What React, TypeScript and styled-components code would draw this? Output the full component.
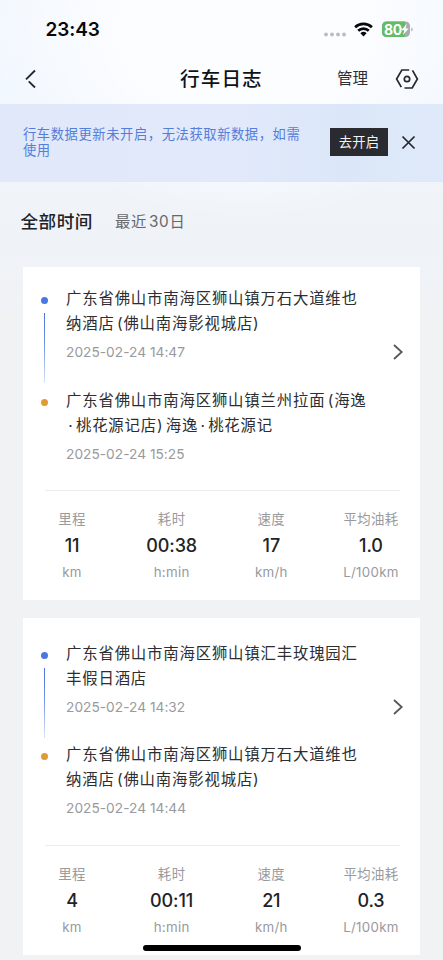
import React from "react";
import styled, { createGlobalStyle } from "styled-components";

const GlobalStyle = createGlobalStyle`
  * { box-sizing: border-box; }
  body {
    margin: 0;
    background: #f1f2f4;
    font-family: Inter, "Noto Sans CJK SC", sans-serif;
    color: #2b2c30;
  }
`;

const Page = styled.main`
  width: 443px;
  height: 960px;
  position: relative;
  overflow: hidden;
  background:
    radial-gradient(ellipse 260px 190px at 245px 30px, #fcfdff 40%, rgba(252, 253, 255, 0) 100%),
    linear-gradient(180deg, #f3f8fe 0px, #f1f7fe 120px, #f0f4f9 190px, #eff3f8 240px, #f1f2f4 330px);
`;

const StatusBar = styled.header`
  height: 56px;
  display: flex;
  justify-content: space-between;
  padding: 19px 30px 0 45.5px;
`;

const Clock = styled.time`
  font-size: 19px;
  line-height: 22px;
  font-weight: 600;
  letter-spacing: -0.1px;
  color: #08090b;
`;

const StatusIcons = styled.div`
  display: flex;
  height: 22px;
  svg { display: block; }
`;

const NavBar = styled.nav`
  height: 48px;
  display: grid;
  grid-template-columns: 180px 1fr 43px 51px;
  align-items: center;
  padding-bottom: 3px;
  padding-right: 12px;
`;

const IconButton = styled.button<{ $inset?: number }>`
  border: 0;
  background: none;
  padding: 0 0 0 ${(p) => p.$inset ?? 0}px;
  display: flex;
  align-items: center;
  svg { display: block; }
`;

const Title = styled.h1`
  margin: 0;
  font-size: 19.6px;
  line-height: 26px;
  font-weight: 500;
  letter-spacing: 1.1px;
  color: #111216;
`;

const Manage = styled.span`
  font-size: 15.5px;
  line-height: 22px;
  color: #2c2d33;
  white-space: nowrap;
`;

const Banner = styled.section`
  height: 78px;
  display: flex;
  align-items: flex-start;
  padding: 22px 27px 0 23px;
  background: linear-gradient(90deg, #e0e8f9 0%, #e2e9fb 50%, #dbe7f8 78%, #dfe9f9 100%);
`;

const BannerText = styled.p`
  margin: 0;
  width: 308px;
  font-size: 13.3px;
  line-height: 16px;
  letter-spacing: 0.57px;
  color: #557ddb;
  white-space: nowrap;
`;

const EnableButton = styled.button`
  width: 58px;
  height: 28px;
  margin-top: 2px;
  padding: 0;
  border: 0;
  background: #292b31;
  color: #f2f3f5;
  font: 13.3px/27px Inter, "Noto Sans CJK SC", sans-serif;
  letter-spacing: 0.3px;
`;

const CloseButton = styled(IconButton)`
  height: 28px;
  margin: 2px 0 0 13px;
`;

const Tabs = styled.div`
  height: 85px;
  display: flex;
  align-items: center;
  padding: 0 0 5px 20.5px;
  gap: 22px;
`;

const Tab = styled.span<{ $active?: boolean }>`
  font-size: ${(p) => (p.$active ? "17.6px" : "15.3px")};
  line-height: 26px;
  font-weight: ${(p) => (p.$active ? 500 : 400)};
  letter-spacing: ${(p) => (p.$active ? "0.5px" : "0.7px")};
  word-spacing: -3px;
  color: ${(p) => (p.$active ? "#212227" : "#66686d")};
`;

const TripList = styled.div`
  display: flex;
  flex-direction: column;
  gap: 18px;
  padding: 0 23px;
`;

const Card = styled.article<{ $top: number }>`
  background: #fff;
  padding: ${(p) => p.$top}px 20px 17px 22px;
`;

const Journey = styled.div`
  display: grid;
  grid-template-columns: 312px 1fr;
  height: 204px;
`;

const Stops = styled.div`
  display: flex;
  flex-direction: column;
  gap: 15px;
`;

const Stop = styled.div`
  display: grid;
  grid-template-columns: 21px 1fr;
  height: 86.5px;
`;

const Rail = styled.div`
  display: flex;
  flex-direction: column;
  align-items: center;
  width: 7px;
  margin-left: -4px;
  padding-top: 11px;
  gap: 9px;
`;

const Dot = styled.i<{ $color: string }>`
  width: 7px;
  height: 7px;
  flex: none;
  border-radius: 50%;
  background: ${(p) => p.$color};
`;

const Line = styled.i`
  width: 1px;
  height: 70px;
  flex: none;
  background: linear-gradient(#4b71d8, #7095e2 45%, #dbe3f5);
`;

const Address = styled.div`
  font-size: 15.4px;
  line-height: 25px;
  letter-spacing: 0.82px;
  word-spacing: -2.8px;
  color: #2d2e31;
  white-space: pre;
`;

const Moment = styled.time`
  display: block;
  margin-top: 6px;
  font-size: 13.7px;
  line-height: 20px;
  letter-spacing: 0.03px;
  color: #999a9d;
  white-space: nowrap;
`;

const OpenTrip = styled(IconButton)`
  justify-self: end;
  height: 20px;
  margin-top: 56px;
  margin-right: -4px;
`;

const Stats = styled.dl`
  display: flex;
  justify-content: space-between;
  margin: 0;
  padding-top: 18px;
  border-top: 1px solid #ededee;
`;

const Stat = styled.div`
  width: 58px;
  display: flex;
  flex-direction: column;
  align-items: center;
  white-space: nowrap;
  &:first-child { margin-left: -2px; }
`;

const StatName = styled.dt`
  font-size: 13.4px;
  line-height: 21px;
  letter-spacing: 0.4px;
  color: #999a9d;
`;

const StatValue = styled.dd`
  margin: 0;
  font-size: 18px;
  line-height: 32px;
  font-weight: 500;
  letter-spacing: -0.1px;
  color: #222326;
`;

const StatUnit = styled.dd`
  margin: 0;
  font-size: 13.3px;
  line-height: 21px;
  letter-spacing: 0.3px;
  color: #999a9d;
`;

const HomeIndicator = styled.div`
  position: absolute;
  left: 143px;
  top: 945px;
  width: 158px;
  height: 6px;
  border-radius: 3px;
  background: #000;
`;

const trips = [
  {
    top: 19,
    stops: [
      { lines: ["广东省佛山市南海区狮山镇万石大道维也", "纳酒店 (佛山南海影视城店)"], time: "2025-02-24 14:47" },
      { lines: ["广东省佛山市南海区狮山镇兰州拉面 (海逸", " · 桃花源记店) 海逸 · 桃花源记"], time: "2025-02-24 15:25" },
    ],
    values: ["11", "00:38", "17", "1.0"],
  },
  {
    top: 22.5,
    stops: [
      { lines: ["广东省佛山市南海区狮山镇汇丰玫瑰园汇", "丰假日酒店"], time: "2025-02-24 14:32" },
      { lines: ["广东省佛山市南海区狮山镇万石大道维也", "纳酒店 (佛山南海影视城店)"], time: "2025-02-24 14:44" },
    ],
    values: ["4", "00:11", "21", "0.3"],
  },
];

const metrics = [
  { name: "里程", unit: "km" },
  { name: "耗时", unit: "h:min" },
  { name: "速度", unit: "km/h" },
  { name: "平均油耗", unit: "L/100km" },
];

const BatteryLabel = styled.text`
  font: 700 14px Inter, sans-serif;
  letter-spacing: -0.4px;
  fill: #fff;
`;

function StatusGlyphs() {
  return (
    <svg width="90" height="22" viewBox="0 0 90 22">
      <g fill="#bcbdc2">
        <circle cx="3" cy="15.5" r="2" />
        <circle cx="9" cy="15.5" r="2" />
        <circle cx="15" cy="15.5" r="2" />
        <circle cx="21" cy="15.5" r="2" />
      </g>
      <g fill="none" stroke="#08090b" strokeWidth="2.7">
        <path d="M32.1 8.2a12.1 12.1 0 0 1 16.8 0" />
        <path d="M35.2 11.7a7.6 7.6 0 0 1 10.6 0" />
      </g>
      <path d="M37.4 14.2a4.5 4.5 0 0 1 6.2 0L40.5 17.4z" fill="#08090b" />
      <path d="M63.500 2.500h19A4.500 4.500 0 0 1 87 7v6.500a4.500 4.500 0 0 1-4.500 4.500h-19A4.500 4.500 0 0 1 59 13.500V7a4.500 4.500 0 0 1 4.500-4.500z" fill="#a9abb0" />
      <path d="M63.500 2.500H82V18H63.500A4.500 4.500 0 0 1 59 13.500V7a4.500 4.500 0 0 1 4.500-4.500z" fill="#63bb67" />
      <path d="M88.300 8.500q1.400.5 1.400 2t-1.400 2z" fill="#a9abb0" />
      <BatteryLabel x="61" y="15.500">80</BatteryLabel>
      <path d="M83.800 4.800l-5.500 6.500h3L79.900 16.300l5.700-6.700h-3.100z" fill="#fff" />
    </svg>
  );
}

export default function App() {
  return (
    <>
      <GlobalStyle />
      <Page lang="zh-CN">
        <StatusBar>
          <Clock>23:43</Clock>
          <StatusIcons><StatusGlyphs /></StatusIcons>
        </StatusBar>
        <NavBar>
          <IconButton $inset={24} aria-label="返回">
            <svg width="14" height="20" viewBox="0 0 14 20" fill="none" stroke="#26282e" strokeWidth="1.9">
              <path d="M11 1.500L2 10.400M4.700 12.400L11 18.500" />
            </svg>
          </IconButton>
          <Title>行车日志</Title>
          <Manage>管理</Manage>
          <IconButton $inset={15} aria-label="设置">
            <svg width="24" height="22" viewBox="0 0 24 22" fill="none" stroke="#26282e" strokeWidth="1.700">
              <path d="M14.200 2H6.800L1.600 11l4.700 8.100M9.500 20h7.700l5.200-9-4.900-8.700" />
              <circle cx="12" cy="11" r="2.700" />
            </svg>
          </IconButton>
        </NavBar>
        <Banner>
          <BannerText>行车数据更新未开启，无法获取新数据，如需<br />使用</BannerText>
          <EnableButton>去开启</EnableButton>
          <CloseButton aria-label="关闭">
            <svg width="15" height="15" viewBox="0 0 15 15" stroke="#24262c" strokeWidth="1.700">
              <path d="M1.500 1.500l12 12M13.500 1.500l-12 12" />
            </svg>
          </CloseButton>
        </Banner>
        <Tabs>
          <Tab $active>全部时间</Tab>
          <Tab>最近 30日</Tab>
        </Tabs>
        <TripList>
          {trips.map((trip) => (
            <Card key={trip.stops[0].time} $top={trip.top}>
              <Journey>
                <Stops>
                  {trip.stops.map((stop, i) => (
                    <Stop key={stop.time}>
                      <Rail>
                        <Dot $color={i === 0 ? "#4a78df" : "#e29a36"} />
                        {i === 0 && <Line />}
                      </Rail>
                      <div>
                        {stop.lines.map((line) => <Address key={line}>{line}</Address>)}
                        <Moment>{stop.time}</Moment>
                      </div>
                    </Stop>
                  ))}
                </Stops>
                <OpenTrip aria-label="查看行程">
                  <svg width="12" height="18" viewBox="0 0 12 18" fill="none" stroke="#57585b" strokeWidth="1.800">
                    <path d="M2 2l7.700 7L2 16" />
                  </svg>
                </OpenTrip>
              </Journey>
              <Stats>
                {metrics.map((m, i) => (
                  <Stat key={m.name}>
                    <StatName>{m.name}</StatName>
                    <StatValue>{trip.values[i]}</StatValue>
                    <StatUnit>{m.unit}</StatUnit>
                  </Stat>
                ))}
              </Stats>
            </Card>
          ))}
        </TripList>
        <HomeIndicator />
      </Page>
    </>
  );
}
